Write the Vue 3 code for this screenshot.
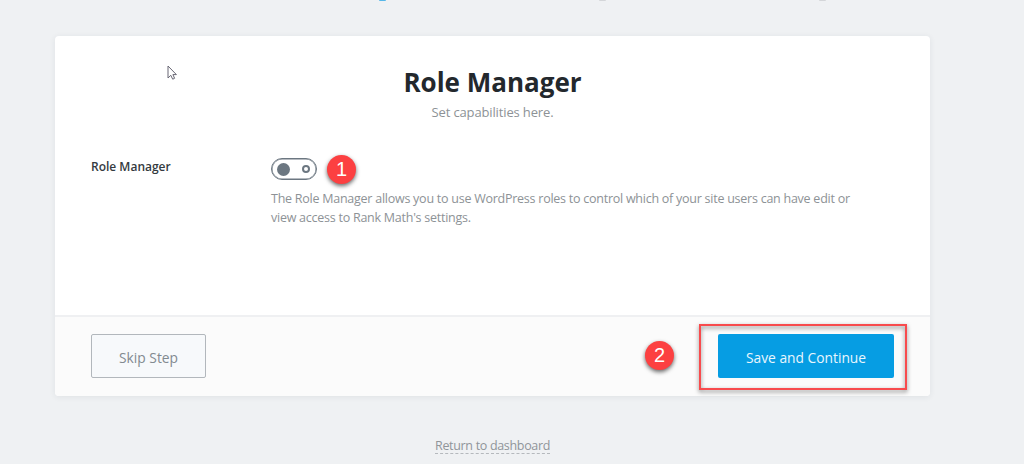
<template>
  <div class="wizard">
    <div class="steps">
      <span class="step-mark active"></span>
      <span class="step-mark"></span>
      <span class="step-mark"></span>
    </div>

    <div class="card">
      <div class="card-body">
        <header class="card-header">
          <h1 class="title">Role Manager</h1>
          <p class="subtitle">Set capabilities here.</p>
        </header>

        <div class="field">
          <div class="field-label">Role Manager</div>
          <div class="field-content">
            <button
              class="toggle"
              :class="{ on: roleManager }"
              role="switch"
              :aria-checked="roleManager"
              aria-label="Role Manager"
              @click="roleManager = !roleManager"
            >
              <span class="knob"></span>
              <span class="ring"></span>
            </button>
            <p class="description">
              The Role Manager allows you to use WordPress roles to control which of your site users can have edit or<br>
              view access to Rank Math's settings.
            </p>
            <span class="badge badge-one">1</span>
          </div>
        </div>
      </div>

      <footer class="card-footer">
        <button class="btn skip">Skip Step</button>
        <div class="save-wrap">
          <button class="btn save">Save and Continue</button>
          <div class="highlight"></div>
          <span class="badge badge-two">2</span>
        </div>
      </footer>
    </div>

    <div class="return">
      <a href="#" class="return-link">Return to dashboard</a>
    </div>

    <svg class="cursor" width="11" height="16" viewBox="0 0 11 16">
      <path d="M1 1V13L3.8 10.3L5.7 14.2L7.6 13.3L5.9 9.6H9.4Z" fill="#fff" stroke="#686774" stroke-width="1" />
    </svg>
  </div>
</template>

<script setup>
import { ref } from 'vue';

const roleManager = ref(false);
</script>

<style>
body {
  margin: 0;
  background: #eff1f3;
}
</style>

<style scoped>
.wizard {
  position: relative;
  width: 1024px;
  height: 464px;
  overflow: hidden;
  background: #eff1f3;
  font-family: 'Open Sans', 'Noto Sans', sans-serif;
}

.steps {
  display: flex;
  gap: 213px;
  height: 36px;
  padding-left: 379px;
}

.step-mark {
  width: 7px;
  height: 1px;
  border-radius: 0 0 3px 3px;
  background: #d4d6d9;
}

.step-mark.active {
  background: #56b7e8;
}

.card {
  width: 875px;
  height: 360px;
  margin-left: 55px;
  border-radius: 4px;
  background: #fff;
  box-shadow: 0 1px 6px rgba(40, 50, 60, 0.08);
}

.card-body {
  box-sizing: border-box;
  height: 279px;
  padding: 27px 36px 0;
}

.card-header {
  height: 95px;
  text-align: center;
}

.title {
  margin: 0;
  color: #23282d;
  font-size: 26px;
  font-weight: 700;
  line-height: 38px;
}

.subtitle {
  margin: 0;
  color: #8d9296;
  font-size: 13px;
  letter-spacing: -0.14px;
  line-height: 22px;
}

.field {
  display: flex;
}

.field-label {
  width: 180px;
  color: #343a40;
  font-size: 12px;
  font-weight: 600;
  line-height: 18px;
}

.field-content {
  position: relative;
  flex: 1;
}

.toggle {
  display: flex;
  align-items: center;
  justify-content: space-between;
  box-sizing: border-box;
  width: 46px;
  height: 22px;
  padding: 0 6px 0 5px;
  border: 1px solid #6c7781;
  border-radius: 11px;
  background: #fff;
  box-shadow: inset 0 0 0 0.5px #6c7781;
  cursor: pointer;
}

.toggle.on {
  flex-direction: row-reverse;
}

.knob {
  width: 13px;
  height: 13px;
  border-radius: 50%;
  background: #6c7781;
}

.ring {
  box-sizing: border-box;
  width: 8px;
  height: 8px;
  border: 2px solid #6c7781;
  border-radius: 50%;
}

.description {
  margin: 9px 0 0;
  color: #8d9296;
  font-size: 12.5px;
  letter-spacing: -0.25px;
  line-height: 19px;
  white-space: nowrap;
}

.card-footer {
  display: flex;
  align-items: flex-start;
  justify-content: space-between;
  box-sizing: border-box;
  height: 81px;
  padding: 17px 36px 0;
  border-top: 2px solid #eff0f2;
  border-radius: 0 0 4px 4px;
  background: #fbfbfb;
}

.btn {
  box-sizing: border-box;
  height: 44px;
  padding: 2px 0 0;
  border: 0;
  border-radius: 2px;
  font-family: inherit;
  font-size: 13.8px;
  white-space: nowrap;
  cursor: pointer;
}

.skip {
  width: 115px;
  border: 1px solid #b2b7bc;
  background: #f7f9fb;
  color: #828a90;
}

.save-wrap {
  position: relative;
}

.save {
  width: 176px;
  background: #069de3;
  color: #e9f6fd;
}

.highlight {
  position: absolute;
  top: -10px;
  left: -19px;
  box-sizing: border-box;
  width: 208px;
  height: 66px;
  border: 2px solid #f84b4d;
  filter: drop-shadow(0 2px 2px rgba(0, 0, 0, 0.5));
  pointer-events: none;
}

.badge {
  position: absolute;
  width: 29px;
  height: 29px;
  border-radius: 50%;
  background: #fc4041;
  box-shadow: 0 2px 4px rgba(0, 0, 0, 0.6);
  color: #fff;
  font-family: 'Liberation Sans', Arial, sans-serif;
  font-size: 20px;
  line-height: 29px;
  text-align: center;
}

.badge-one {
  top: -3px;
  left: 56px;
}

.badge-two {
  top: 7px;
  left: -73px;
}

.return {
  padding-top: 39px;
  padding-left: 435px;
  line-height: 18px;
}

.return-link {
  display: inline-block;
  height: 16px;
  border-bottom: 1px dashed #b5b9bd;
  color: #90959a;
  font-size: 12.5px;
  letter-spacing: -0.32px;
  line-height: 18px;
  text-decoration: none;
}

.cursor {
  position: absolute;
  top: 65px;
  left: 167px;
}
</style>
